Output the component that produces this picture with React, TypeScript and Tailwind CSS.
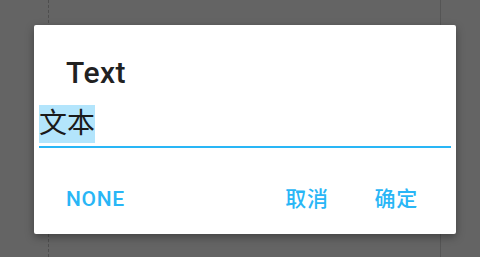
import React from "react";

export default function App() {
  return (
    <div className="relative h-[257px] w-[480px] overflow-hidden bg-[#646464] pt-[25px] pl-[34px] font-['Roboto','Noto_Sans_CJK_SC',sans-serif]">
      {/* guide lines behind the dialog */}
      <div className="absolute top-0 bottom-0 left-[48px] border-l border-dashed border-[#4e4e4e]" />
      <div className="absolute top-0 bottom-0 left-[440px] border-l border-[#555555]" />

      <div className="relative flex h-[209px] w-[422px] flex-col rounded-[2px] bg-white shadow-[0_3px_8px_rgba(0,0,0,0.35)]">
        <h1 className="pt-[30px] pl-[32px] text-[30px] leading-[36px] font-medium tracking-[0.5px] text-[#212121]">
          Text
        </h1>

        <div className="mx-[5px] mt-[14px] border-b-2 border-[#29b6f6] pb-[3px]">
          <span className="inline-block h-[38px] bg-[#b3e5fc] text-[28px] leading-[38px] text-[#1a1a1a]">
            文本
          </span>
        </div>

        <div className="mt-[39px] flex items-center pr-[38px] pl-[32px] text-[21px] leading-[24px] font-medium tracking-[0.7px] text-[#29b6f6]">
          <button type="button">NONE</button>
          <div className="flex-1" />
          <button type="button">取消</button>
          <button type="button" className="ml-[46px]">
            确定
          </button>
        </div>
      </div>
    </div>
  );
}
